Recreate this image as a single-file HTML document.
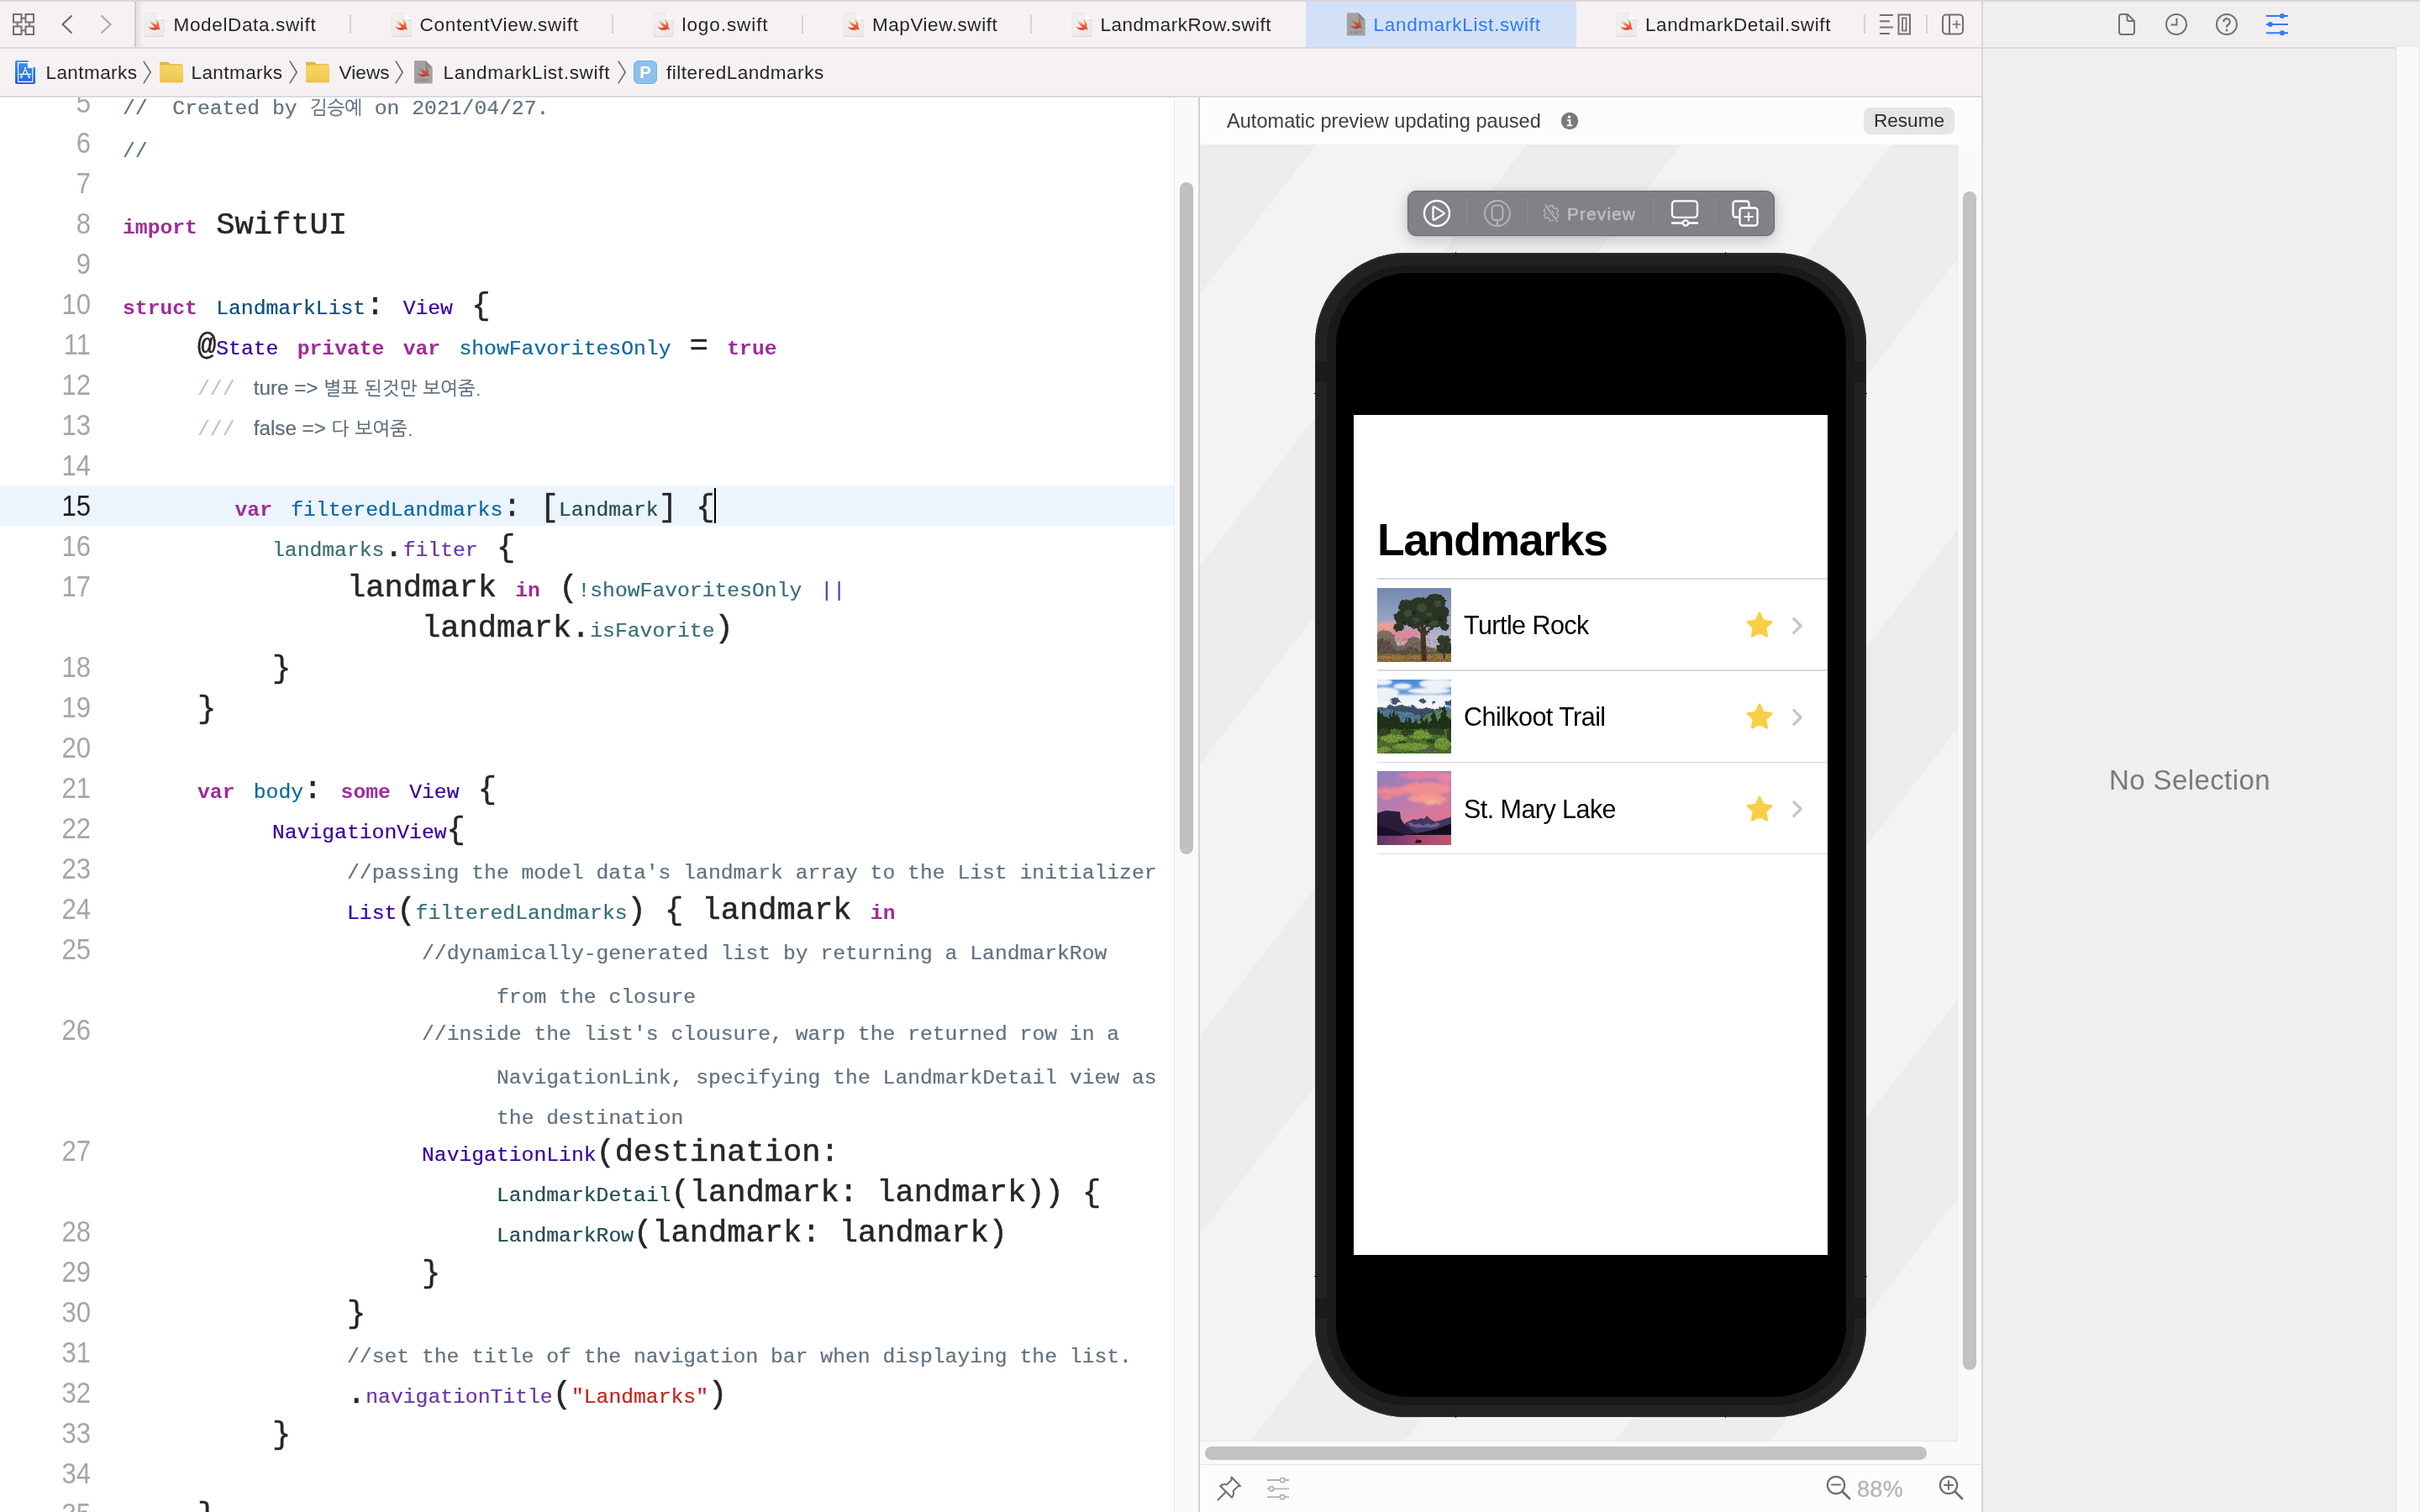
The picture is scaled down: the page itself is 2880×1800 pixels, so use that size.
<!DOCTYPE html>
<html lang="en">
<head>
<meta charset="utf-8">
<title>LandmarkList.swift</title>
<style>
*{box-sizing:border-box;margin:0;padding:0}
html,body{width:2880px;height:1800px;overflow:hidden;background:#fff}
body{position:relative;will-change:transform;font-family:"Liberation Sans","NanumGothic",sans-serif;color:#262626}
.abs{position:absolute}
/* top bars */
#topline{left:0;top:0;width:2880px;height:2px;background:#d9d6d8}
#tabbar{left:0;top:2px;width:2358px;height:54px;background:#f6f2f4}
#tabborder{left:0;top:56px;width:2880px;height:2px;background:#dbd8da}
#crumbbar{left:0;top:58px;width:2358px;height:56px;background:#f6f2f4}
#crumbborder{left:0;top:114px;width:2358px;height:2px;background:#dcd9db}
#navdiv{left:160px;top:2px;width:2px;height:54px;background:#cfcccd}
#navshadow{left:162px;top:2px;width:9px;height:54px;background:linear-gradient(90deg,#e3dfe1,#f6f2f4)}
.tab{top:3px;height:54px;white-space:nowrap;font-size:22.5px;letter-spacing:.55px;line-height:54px;color:#262626}
.tabsep{top:18px;width:2px;height:22px;background:#d6d3d5}
#activetab{left:1554px;top:2px;width:322px;height:54px;background:#d3e1f8}
.crumb{top:59px;height:56px;line-height:56px;white-space:nowrap;font-size:22.5px;letter-spacing:.42px;margin-left:-.5px;color:#262626}
/* inspector */
#inspector{left:2360px;top:2px;width:520px;height:1798px;background:#f1eeef}
#vdiv{left:2358px;top:2px;width:2px;height:1798px;background:#d8d5d7}
#insptrack{left:2850px;top:56px;width:30px;height:1744px;background:linear-gradient(90deg,#eeeaeb 0,#e8e7e7 1.5px,#f6f6f6 2px,#fafafa 5px,#fafafa 27.5px,#f0efef 28px)}
#nosel{left:2510px;top:907px;font-size:33px;letter-spacing:.4px;color:#7b797a;line-height:44px;white-space:nowrap}
/* editor */
#editor{left:0;top:116px;width:1397px;height:1684px;background:#fff;overflow:hidden}
#edgutter{left:1397px;top:116px;width:29px;height:1684px;background:#fafafa;border-left:1px solid #e8e8e8}
#edthumb{left:1404px;top:217px;width:16px;height:800px;border-radius:8px;background:#c1c1c1}
#eddiv{left:1426px;top:116px;width:2px;height:1684px;background:#d6d3d4}
#hl{left:0;top:462px;width:1397px;height:48px;background:#ecf4fe}
</style>
<style>
.row{position:absolute;height:48px;line-height:48px;margin-top:-33.9px;white-space:pre;font-family:"Liberation Mono","NanumGothic",monospace;font-size:37.08px;color:#262626}
.row{-webkit-text-stroke-width:.5px}
.row span{line-height:0;font-size:24.71px;-webkit-text-stroke-width:.22px}
.row span.k{-webkit-text-stroke-width:0}
.ln{position:absolute;left:0;width:108px;text-align:right;height:48px;line-height:48px;margin-top:-36.4px;font-size:34.5px;letter-spacing:0;transform:scaleX(.9);transform-origin:100% 50%;color:#a6a6a6;font-family:"Liberation Sans",sans-serif}
.ln.cur{color:#1f1f1f}
.k{color:#a02c98;font-weight:bold}
.c,.ck,.csp{color:#637280}
.c3{color:#bcc4cc}
.s{color:#c4241c}
.td{color:#0b4f79}
.d{color:#0f68a0}
.pc{color:#224e53}
.pv{color:#377178}
.sc{color:#3900a0}
.sf{color:#6c36a9}
.row span.dc{font-family:"Liberation Sans","NanumGothic",sans-serif;font-size:24.2px;color:#5d6c79}
.row span.dk{font-family:"NanumGothic","Liberation Sans",sans-serif;font-size:22.1px;color:#5d6c79;word-spacing:1px}
.row span.ck{font-family:"NanumGothic",sans-serif;font-size:22.5px;letter-spacing:-.3px}
#caret{left:850px;top:465px;width:2px;height:42px;background:#000}
</style>
<style>
#pvhead{left:1428px;top:116px;width:930px;height:56px;background:#fcfcfc}
#pvtitle{left:1460px;top:116px;height:56px;line-height:56px;font-size:23.6px;letter-spacing:.0px;color:#3d3d3d;white-space:nowrap}
#resume{left:2218px;top:128px;width:108px;height:32px;border-radius:8px;background:#e5e5e5;color:#2e2e2e;font-size:22.6px;line-height:32px;text-align:center;padding-top:0}
#canvas{left:1428px;top:172px;width:902px;height:1543px;background:#f3f3f3;overflow:hidden}
#cvborderR{left:2329px;top:172px;width:1px;height:1544px;background:#e6e6e6}
#cvborderB{left:1428px;top:1715px;width:902px;height:1px;background:#e6e6e6}
#vtrack{left:2330px;top:172px;width:28px;height:1572px;background:#fafafa}
#vthumb{left:2336px;top:228px;width:16px;height:1403px;border-radius:8px;background:#c2c2c2}
#htrack{left:1428px;top:1716px;width:902px;height:28px;background:#fafafa}
#hthumb{left:1434px;top:1722px;width:859px;height:16px;border-radius:8px;background:#c2c2c2}
#pvbotline{left:1428px;top:1743px;width:930px;height:1px;background:#e8e8e8}
#pvbot{left:1428px;top:1744px;width:930px;height:56px;background:#fcfcfc}
#zoompct{left:2210px;top:1753px;font-size:27px;line-height:40px;color:#b5b5b5;letter-spacing:.3px;-webkit-text-stroke:.35px #b5b5b5}
/* toolbar */
#tb{left:1675px;top:227px;width:437px;height:54px;border-radius:10px;background:#818288;border:1.5px solid #696a70;box-shadow:0 5px 18px rgba(0,0,0,.2),0 0 3px rgba(0,0,0,.12)}
.tbsep{top:237px;width:1px;height:33px;background:#8b8c92}
#tbprev{left:1865px;top:237px;height:36px;line-height:36px;font-size:21px;font-weight:normal;color:#bcbdc1;-webkit-text-stroke:.6px #bcbdc1;letter-spacing:1.05px}
/* phone */
#phone{left:1565px;top:301px;width:656px;height:1386px;border-radius:108px;background:#222;box-shadow:inset 0 0 0 1.5px #2e2e2e}
#phone2{left:1579px;top:315.5px;width:628px;height:1357px;border-radius:95px;background:#191919}
#phone3{left:1589.5px;top:325px;width:607.5px;height:1337.5px;border-radius:86px;background:#000}
#screen{left:1611px;top:494px;width:564px;height:1000px;background:#fff;overflow:hidden}
#lmtitle{left:28px;top:114px;font-size:53.5px;font-weight:bold;line-height:70px;color:#000;letter-spacing:-1.3px;white-space:nowrap}
.sepl{left:28px;width:536px;height:1.5px;background:#d9d9db}
.thumb{left:29px;width:88px;height:88px}
.rtext{left:131px;font-size:30.5px;line-height:50px;color:#000;white-space:nowrap;letter-spacing:-.55px}
</style>
</head><body>
<svg width="0" height="0" style="position:absolute">
<defs>
<linearGradient id="gSwift" x1="0" y1="0" x2="0" y2="1"><stop offset="0" stop-color="#f7a34d"/><stop offset="1" stop-color="#e7352b"/></linearGradient>
<linearGradient id="gSwiftD" x1="0" y1="0" x2="0" y2="1"><stop offset="0" stop-color="#c9743f"/><stop offset="1" stop-color="#b83a29"/></linearGradient>
<linearGradient id="gPage" x1="0" y1="0" x2="1" y2="1"><stop offset="0" stop-color="#f1f1f1"/><stop offset="1" stop-color="#e9e9e9"/></linearGradient>
<linearGradient id="gProj" x1="0" y1="0" x2="0" y2="1"><stop offset="0" stop-color="#4196e8"/><stop offset="1" stop-color="#2160df"/></linearGradient>
<linearGradient id="gFold" x1="0" y1="0" x2="0" y2="1"><stop offset="0" stop-color="#f6d566"/><stop offset="1" stop-color="#f0c84f"/></linearGradient>
<path id="bird" d="M13.543 3.41c4.114 2.47 6.545 7.162 5.549 11.131-.024.093-.05.181-.076.272l.002.001c2.062 2.538 1.5 5.258 1.236 4.745-1.072-2.086-3.066-1.568-4.088-1.043a6.803 6.803 0 0 1-.281.158l-.02.012-.002.002c-2.115 1.123-4.957 1.205-7.812-.022a12.568 12.568 0 0 1-5.64-4.838c.649.48 1.35.902 2.097 1.252 3.019 1.414 6.051 1.311 8.197-.002C9.651 12.73 7.101 9.67 5.146 7.191a10.628 10.628 0 0 1-1.005-1.384c2.34 2.142 6.038 4.83 7.365 5.576C8.69 8.408 6.208 4.743 6.324 4.86c4.436 4.47 8.528 6.996 8.528 6.996.154.085.27.154.36.213.085-.215.16-.437.224-.668.708-2.588-.09-5.548-1.893-7.992z"/>
<!-- swift file icon 26x30 -->
<symbol id="icSwift" viewBox="0 0 26 30">
<path d="M2.300 1.400h14.200l7.800 7.800V27.600a1.300 1.300 0 0 1-1.300 1.300H2.300A1.300 1.300 0 0 1 1 27.600V2.700A1.300 1.300 0 0 1 2.300 1.400z" fill="#cfcccd" transform="translate(0,1)" opacity=".75"/>
<path d="M2.300 1.400h14.200l7.800 7.800V27.600a1.300 1.300 0 0 1-1.300 1.300H2.300A1.300 1.300 0 0 1 1 27.600V2.700A1.300 1.300 0 0 1 2.300 1.400z" fill="url(#gPage)" stroke="#e2e0e1" stroke-width=".6"/>
<path d="M16.500 1.400l7.800 7.800h-6.500a1.300 1.300 0 0 1-1.300-1.300z" fill="#fcfcfc"/>
<path d="M16.700 9.200h7.600v1.800c-2.200-1.200-4.800-1.700-7.600-1.800z" fill="#d4d4d4" opacity=".6"/>
<use href="#bird" transform="translate(3.100,6.200) scale(.8)" fill="url(#gSwift)"/>
</symbol>
<!-- gray swift file icon 24x28 -->
<symbol id="icSwiftG" viewBox="0 0 24 28">
<path d="M2.200 .300h12.300L22.700 8.500V26.300a1.300 1.300 0 0 1-1.300 1.300H2.200A1.300 1.300 0 0 1 .900 26.300V1.600A1.300 1.300 0 0 1 2.200 .300z" fill="#a3a1a2"/>
<path d="M14.500 .300L22.700 8.500h-6.900a1.300 1.300 0 0 1-1.300-1.300z" fill="#8a8889"/>
<use href="#bird" transform="translate(2.300,3.600) scale(.8)" fill="url(#gSwiftD)"/>
<text x="11.800" y="25.200" text-anchor="middle" font-family="Liberation Sans,sans-serif" font-weight="bold" font-size="4.300" letter-spacing=".2" fill="#868485">SWIFT</text>
</symbol>
<symbol id="icFolder" viewBox="0 0 28 26">
<path d="M1.500 .800h7.800c.8 0 1.400.3 1.900.9l1.400 1.500h13.300a1.600 1.600 0 0 1 1.600 1.600V8H0V2.300A1.500 1.500 0 0 1 1.500 .800z" fill="#e2b53e"/>
<path d="M0 6.200a1.600 1.600 0 0 1 1.600-1.600h24.800A1.600 1.600 0 0 1 28 6.200v17.600a1.600 1.600 0 0 1-1.600 1.600H1.600A1.600 1.600 0 0 1 0 23.800z" fill="url(#gFold)"/>
<rect x="0" y="22.600" width="28" height="1" fill="#e3b840" opacity=".8"/>
</symbol>
<symbol id="icProj" viewBox="0 0 24 28">
<path d="M1.800 0h14L24 8.200V26.200A1.800 1.800 0 0 1 22.200 28H1.800A1.800 1.800 0 0 1 0 26.200V1.800A1.800 1.800 0 0 1 1.800 0z" fill="url(#gProj)"/>
<path d="M3.600 2.600h11.800v6.200h5.400V25.400H3.600z" fill="none" stroke="#fff" stroke-width="1.100"/>
<path d="M15.800 0L24 8.200h-8.200z" fill="#fff"/>
<path d="M12.600 8.800l-5 10.400M11.400 8.800l5 10.400M6 16.400h12" fill="none" stroke="#fff" stroke-width="1.250" stroke-linecap="round"/><circle cx="7.300" cy="20" r="1.100" fill="none" stroke="#fff" stroke-width=".8"/><circle cx="16.700" cy="20" r="1.100" fill="none" stroke="#fff" stroke-width=".8"/><circle cx="6" cy="16.400" r="1" fill="#fff"/><circle cx="18" cy="16.400" r="1" fill="#fff"/>
</symbol>
<symbol id="icChev" viewBox="0 0 10 28">
<path d="M.800 .600L9.200 14 .800 27.400" fill="none" stroke="#6a6869" stroke-width="1.600"/>
</symbol>
</defs>
</svg>
<div id="inspector" class="abs"></div>
<div id="tabbar" class="abs"></div>
<div id="crumbbar" class="abs"></div>
<div id="activetab" class="abs"></div>
<div id="topline" class="abs"></div>
<div id="tabborder" class="abs"></div>
<div id="crumbborder" class="abs"></div>
<div id="navshadow" class="abs"></div>
<div id="navdiv" class="abs"></div>
<div id="vdiv" class="abs"></div>
<div id="insptrack" class="abs"></div>
<!-- nav icons -->
<svg class="abs" style="left:14px;top:15px" width="28" height="28" viewBox="0 0 28 28" fill="none" stroke="#727071" stroke-width="2">
<rect x="2" y="2" width="9.500" height="9.500"/><rect x="16.500" y="2" width="9.500" height="9.500"/><rect x="2" y="16.500" width="9.500" height="9.500"/><rect x="16.500" y="16.500" width="9.500" height="9.500"/>
<path d="M11.500 6.700h5M6.700 11.500v5M21.200 11.500v5M11.500 21.200h5"/>
</svg>
<svg class="abs" style="left:72px;top:17px" width="16" height="24" viewBox="0 0 16 24" fill="none" stroke="#6e6c6d" stroke-width="2.200"><path d="M13.500 1.500L2.500 12l11 10.500"/></svg>
<svg class="abs" style="left:118px;top:17px" width="16" height="24" viewBox="0 0 16 24" fill="none" stroke="#aeacad" stroke-width="2.200"><path d="M2.500 1.500L13.500 12l-11 10.500"/></svg>
<!-- tabs -->
<svg class="abs" style="left:171px;top:14px" width="26" height="30"><use href="#icSwift"/></svg>
<div class="abs tab" style="left:206.500px;letter-spacing:.65px">ModelData.swift</div>
<div class="abs tabsep" style="left:416px"></div>
<svg class="abs" style="left:465px;top:14px" width="26" height="30"><use href="#icSwift"/></svg>
<div class="abs tab" style="left:499.500px;letter-spacing:.7px">ContentView.swift</div>
<div class="abs tabsep" style="left:728px"></div>
<svg class="abs" style="left:777px;top:14px" width="26" height="30"><use href="#icSwift"/></svg>
<div class="abs tab" style="left:811.500px;letter-spacing:.92px">logo.swift</div>
<div class="abs tabsep" style="left:954px"></div>
<svg class="abs" style="left:1003px;top:14px" width="26" height="30"><use href="#icSwift"/></svg>
<div class="abs tab" style="left:1038px">MapView.swift</div>
<div class="abs tabsep" style="left:1226px"></div>
<svg class="abs" style="left:1275px;top:14px" width="26" height="30"><use href="#icSwift"/></svg>
<div class="abs tab" style="left:1309.500px;letter-spacing:.5px">LandmarkRow.swift</div>
<svg class="abs" style="left:1602px;top:15px" width="24" height="28"><use href="#icSwiftG"/></svg>
<div class="abs tab" style="left:1634.500px;color:#2f7af5;letter-spacing:.71px">LandmarkList.swift</div>
<svg class="abs" style="left:1923px;top:14px" width="26" height="30"><use href="#icSwift"/></svg>
<div class="abs tab" style="left:1958px;letter-spacing:.61px">LandmarkDetail.swift</div>
<div class="abs tabsep" style="left:2218px"></div>
<svg class="abs" style="left:2237px;top:16px" width="38" height="26" viewBox="0 0 38 26" fill="none" stroke="#727071" stroke-width="2">
<path d="M0 2h16M0 9.300h12M0 16.600h16M0 24h12"/><rect x="22.500" y="1.500" width="13.500" height="23"/><rect x="27" y="5.500" width="4.500" height="15" stroke-width="1.800"/>
</svg>
<div class="abs tabsep" style="left:2292px"></div>
<svg class="abs" style="left:2310px;top:15px" width="28" height="28" viewBox="0 0 28 28" fill="none" stroke="#727071" stroke-width="2">
<rect x="2" y="2.500" width="24" height="23" rx="4"/><path d="M10 2.500v23"/><path d="M13.800 14h9.400M18.500 9.300v9.400" stroke-width="1.700"/>
</svg>
<!-- breadcrumb -->
<svg class="abs" style="left:18px;top:72px" width="24" height="28"><use href="#icProj"/></svg>
<div class="abs crumb" style="left:55px">Lantmarks</div>
<svg class="abs" style="left:170px;top:72px" width="10" height="28"><use href="#icChev"/></svg>
<svg class="abs" style="left:190px;top:73px" width="28" height="26"><use href="#icFolder"/></svg>
<div class="abs crumb" style="left:228px">Lantmarks</div>
<svg class="abs" style="left:344px;top:72px" width="10" height="28"><use href="#icChev"/></svg>
<svg class="abs" style="left:364px;top:73px" width="28" height="26"><use href="#icFolder"/></svg>
<div class="abs crumb" style="left:404px;letter-spacing:.12px">Views</div>
<svg class="abs" style="left:470px;top:72px" width="10" height="28"><use href="#icChev"/></svg>
<svg class="abs" style="left:492px;top:72px" width="24" height="28"><use href="#icSwiftG"/></svg>
<div class="abs crumb" style="left:528px;letter-spacing:.68px">LandmarkList.swift</div>
<svg class="abs" style="left:735px;top:72px" width="10" height="28"><use href="#icChev"/></svg>
<div class="abs" style="left:754px;top:72px;width:28px;height:28px;border-radius:6px;background:#8ec0ea;border:1.500px solid #6fb0e6;color:#fff;font-weight:bold;font-size:20.500px;line-height:25px;text-align:center;box-shadow:0 0 0 1px rgba(255,255,255,.55)">P</div>
<div class="abs crumb" style="left:793.500px;letter-spacing:.52px">filteredLandmarks</div>
<!-- inspector -->
<svg class="abs" style="left:2520px;top:15px" width="22" height="28" viewBox="0 0 22 28" fill="none" stroke="#727071" stroke-width="2" stroke-linejoin="round">
<path d="M4.500 2h7.500l8 8v13.500a2.500 2.500 0 0 1-2.500 2.500h-13A2.500 2.500 0 0 1 2 23.500v-19A2.500 2.500 0 0 1 4.500 2z"/><path d="M11.500 2.500v5.500a2 2 0 0 0 2 2h6"/>
</svg>
<svg class="abs" style="left:2576px;top:15px" width="28" height="28" viewBox="0 0 28 28" fill="none" stroke="#727071" stroke-width="2"><circle cx="14" cy="14" r="12"/><path d="M14.500 6.500v8h-7"/></svg>
<svg class="abs" style="left:2636px;top:15px" width="28" height="28" viewBox="0 0 28 28" fill="none" stroke="#727071" stroke-width="2"><circle cx="14" cy="14" r="12"/><path d="M10.200 11a3.800 3.800 0 1 1 5.800 3.200c-1.300.8-2 1.400-2 3v.4" stroke-width="2.200"/><circle cx="14" cy="21" r="1.400" fill="#727071" stroke="none"/></svg>
<svg class="abs" style="left:2696px;top:14px" width="28" height="30" viewBox="0 0 28 30" fill="none" stroke="#3478f6" stroke-width="2"><path d="M1 5h26M1 15h26M1 25.200h26"/><circle cx="20" cy="5" r="3" fill="#3478f6" stroke="none"/><circle cx="5.800" cy="15" r="3" fill="#3478f6" stroke="none"/><circle cx="20" cy="25.200" r="3" fill="#3478f6" stroke="none"/></svg>
<div id="nosel" class="abs">No Selection</div>
<div id="editor" class="abs">
<div id="hl" class="abs"></div>
<div class="ln" style="top:18.5px">5</div>
<div class="row" style="left:146px;top:19.6px"><span class="c">//</span><span class="csp">  </span><span class="c">Created by</span><span class="csp"> </span><span class="ck">김승예</span><span class="csp"> </span><span class="c">on 2021/04/27.</span></div>
<div class="ln" style="top:66.5px">6</div>
<div class="row" style="left:146px;top:70.8px"><span class="c">//</span></div>
<div class="ln" style="top:114.5px">7</div>
<div class="ln" style="top:162.5px">8</div>
<div class="row" style="left:146px;top:162px"><span class="k">import</span> SwiftUI</div>
<div class="ln" style="top:210.5px">9</div>
<div class="ln" style="top:258.5px">10</div>
<div class="row" style="left:146px;top:258px"><span class="k">struct</span> <span class="td">LandmarkList</span>: <span class="sc">View</span> {</div>
<div class="ln" style="top:306.5px">11</div>
<div class="row" style="left:235px;top:306px">@<span class="sc">State</span> <span class="k">private</span> <span class="k">var</span> <span class="d">showFavoritesOnly</span> = <span class="k">true</span></div>
<div class="ln" style="top:354.5px">12</div>
<div class="row" style="left:235px;top:354px"><span class="c3">///</span> <span class="dc">ture =&gt; </span><span class="dk">별표 된것만 보여줌.</span></div>
<div class="ln" style="top:402.5px">13</div>
<div class="row" style="left:235px;top:402px"><span class="c3">///</span> <span class="dc">false =&gt; </span><span class="dk">다 보여줌.</span></div>
<div class="ln" style="top:450.5px">14</div>
<div class="ln cur" style="top:498.5px">15</div>
<div class="row" style="left:279.5px;top:498px"><span class="k">var</span> <span class="d">filteredLandmarks</span>: [<span class="pc">Landmark</span>] {</div>
<div class="ln" style="top:546.5px">16</div>
<div class="row" style="left:324px;top:546px"><span class="pv">landmarks</span>.<span class="sf">filter</span> {</div>
<div class="ln" style="top:594.5px">17</div>
<div class="row" style="left:413px;top:594px">landmark <span class="k">in</span> (<span class="pv">!showFavoritesOnly</span> <span class="sf">||</span></div>
<div class="row" style="left:502px;top:642px">landmark.<span class="pv">isFavorite</span>)</div>
<div class="ln" style="top:690.5px">18</div>
<div class="row" style="left:324px;top:690px">}</div>
<div class="ln" style="top:738.5px">19</div>
<div class="row" style="left:235px;top:738px">}</div>
<div class="ln" style="top:786.5px">20</div>
<div class="ln" style="top:834.5px">21</div>
<div class="row" style="left:235px;top:834px"><span class="k">var</span> <span class="d">body</span>: <span class="k">some</span> <span class="sc">View</span> {</div>
<div class="ln" style="top:882.5px">22</div>
<div class="row" style="left:324px;top:882px"><span class="sc">NavigationView</span>{</div>
<div class="ln" style="top:930.5px">23</div>
<div class="row" style="left:413px;top:930px"><span class="c">//passing the model data's landmark array to the List initializer</span></div>
<div class="ln" style="top:978.5px">24</div>
<div class="row" style="left:413px;top:978px"><span class="sc">List</span>(<span class="pv">filteredLandmarks</span>) { landmark <span class="k">in</span></div>
<div class="ln" style="top:1026.5px">25</div>
<div class="row" style="left:502px;top:1026px"><span class="c">//dynamically-generated list by returning a LandmarkRow</span></div>
<div class="row" style="left:591px;top:1077.7px"><span class="c">from the closure</span></div>
<div class="ln" style="top:1122.5px">26</div>
<div class="row" style="left:502px;top:1122px"><span class="c">//inside the list's clousure, warp the returned row in a</span></div>
<div class="row" style="left:591px;top:1173.9px"><span class="c">NavigationLink, specifying the LandmarkDetail view as</span></div>
<div class="row" style="left:591px;top:1221.9px"><span class="c">the destination</span></div>
<div class="ln" style="top:1266.5px">27</div>
<div class="row" style="left:502px;top:1266px"><span class="sc">NavigationLink</span>(destination:</div>
<div class="row" style="left:591px;top:1314px"><span class="pc">LandmarkDetail</span>(landmark: landmark)) {</div>
<div class="ln" style="top:1362.5px">28</div>
<div class="row" style="left:591px;top:1362px"><span class="pc">LandmarkRow</span>(landmark: landmark)</div>
<div class="ln" style="top:1410.5px">29</div>
<div class="row" style="left:502px;top:1410px">}</div>
<div class="ln" style="top:1458.5px">30</div>
<div class="row" style="left:413px;top:1458px">}</div>
<div class="ln" style="top:1506.5px">31</div>
<div class="row" style="left:413px;top:1506px"><span class="c">//set the title of the navigation bar when displaying the list.</span></div>
<div class="ln" style="top:1554.5px">32</div>
<div class="row" style="left:413px;top:1554px">.<span class="sf">navigationTitle</span>(<span class="s">"Landmarks"</span>)</div>
<div class="ln" style="top:1602.5px">33</div>
<div class="row" style="left:324px;top:1602px">}</div>
<div class="ln" style="top:1650.5px">34</div>
<div class="ln" style="top:1698.5px">35</div>
<div class="row" style="left:235px;top:1698px">}</div>
<div id="caret" class="abs"></div>
</div>
<div id="edgutter" class="abs"></div><div id="edthumb" class="abs"></div><div id="eddiv" class="abs"></div>
<div id="pvhead" class="abs"></div>
<div id="pvtitle" class="abs">Automatic preview updating paused</div>
<svg class="abs" style="left:1857px;top:133px" width="22" height="22" viewBox="0 0 22 22"><circle cx="11" cy="11" r="10.200" fill="#7a7a7a"/><circle cx="10.600" cy="6.300" r="1.700" fill="#fff"/><path d="M8 9.300h4.300v6.200h2v1.700H7.800v-1.700h2.200V11H8z" fill="#fff"/></svg>
<div id="resume" class="abs">Resume</div>
<div id="canvas" class="abs"><svg class="abs" style="left:0;top:0" width="902" height="1543" viewBox="0 0 902 1543" fill="#ededed"><polygon points="-44.9,0 138.6,0 -1058.8,1543 -1242.3,1543"/><polygon points="389.3,0 572.8,0 -624.6,1543 -808.1,1543"/><polygon points="823.5,0 1007.0,0 -190.4,1543 -373.9,1543"/><polygon points="1257.7,0 1441.2,0 243.8,1543 60.3,1543"/><polygon points="1691.9,0 1875.4,0 678.0,1543 494.5,1543"/></svg></div>
<div id="cvborderR" class="abs"></div><div id="vtrack" class="abs"></div><div id="vthumb" class="abs"></div>
<div id="htrack" class="abs"></div><div id="cvborderB" class="abs"></div><div id="hthumb" class="abs"></div>
<div id="pvbot" class="abs"></div><div id="pvbotline" class="abs"></div>
<svg class="abs" style="left:1447px;top:1756px" width="32" height="32" viewBox="0 0 32 32" fill="none" stroke="#6f6f6f" stroke-width="2" stroke-linejoin="round" stroke-linecap="round"><path d="M18.500 2.500l10.500 10.500-3 .6-5.400 5.400c.9 2.700.3 5.600-1.600 7.800L5.200 13c2.200-1.900 5.100-2.500 7.800-1.600l5.400-5.400z"/><path d="M12 20L2.500 29.500"/></svg>
<svg class="abs" style="left:1507px;top:1756px" width="28" height="32" viewBox="0 0 28 32" fill="none" stroke="#b3b3b3" stroke-width="1.800"><path d="M1 6h15.500M22 6h5M1 16.300h2.500M9 16.300h18M1 26.200h15.500M22 26.200h5"/><circle cx="19.200" cy="6" r="2.700"/><circle cx="6.200" cy="16.300" r="2.700"/><circle cx="19.200" cy="26.200" r="2.700"/></svg>
<svg class="abs" style="left:2172px;top:1755px" width="32" height="32" viewBox="0 0 32 32" fill="none" stroke="#6f6f6f" stroke-width="2.200" stroke-linecap="round"><circle cx="13" cy="13" r="10.200"/><path d="M20.500 20.500l8.500 8.500" stroke-width="2.800"/><path d="M8 12.500h10" stroke-width="2"/></svg>
<div id="zoompct" class="abs">88%</div>
<svg class="abs" style="left:2306px;top:1755px" width="32" height="32" viewBox="0 0 32 32" fill="none" stroke="#6f6f6f" stroke-width="2.200" stroke-linecap="round"><circle cx="13" cy="13" r="10.200"/><path d="M20.500 20.500l8.500 8.500" stroke-width="2.800"/><path d="M8 13h10M13 8v10" stroke-width="2"/></svg>
<div id="tb" class="abs"></div>
<div class="abs tbsep" style="left:1745px"></div>
<div class="abs tbsep" style="left:1817px"></div>
<div class="abs tbsep" style="left:1968px"></div>
<div class="abs tbsep" style="left:2040px"></div>
<svg class="abs" style="left:1692px;top:236px" width="36" height="36" viewBox="0 0 36 36" fill="none" stroke="#fff" stroke-width="2.300" stroke-linejoin="round"><circle cx="18" cy="18" r="15"/><path d="M13.500 11.200v13.600a1 1 0 0 0 1.500.9l11-6.800a1 1 0 0 0 0-1.800l-11-6.800a1 1 0 0 0-1.500.9z" stroke-width="2.200"/></svg>
<svg class="abs" style="left:1764px;top:236px" width="36" height="36" viewBox="0 0 36 36" fill="none" stroke="#b2b3b7" stroke-width="2"><circle cx="18" cy="18" r="15"/><rect x="11.500" y="8.500" width="13" height="17.500" rx="4.500"/><path d="M18 26v7"/></svg>
<svg class="abs" style="left:1833px;top:240px" width="26" height="28" viewBox="0 0 26 28" fill="none" stroke="#b6b7bb" stroke-width="1.600" stroke-linejoin="round"><g transform="translate(13,14) scale(.86) translate(-13,-14)"><path d="M10.800 3.200h4.400l.7 3 2.100 1.200 2.900-.9 2.200 3.800-2.200 2.100v2.400l2.200 2.100-2.200 3.800-2.900-.9-2.100 1.200-.7 3h-4.400l-.7-3-2.100-1.200-2.900.9-2.200-3.800 2.200-2.100v-2.400L2.900 10.300l2.200-3.800 2.900.9 2.100-1.200z"/><circle cx="13" cy="14" r="3.200" stroke-width="1.400"/></g><path d="M5.500 4.500l14 19" stroke="#818288" stroke-width="4.600"/><path d="M5.800 3.800l15 20.500" stroke-width="1.700"/></svg>
<div id="tbprev" class="abs">Preview</div>
<svg class="abs" style="left:1987px;top:236px" width="36" height="36" viewBox="0 0 36 36" fill="none" stroke="#fff" stroke-width="2.300"><rect x="3" y="3.300" width="30" height="19.500" rx="3.500"/><path d="M2 29.500h13.500M22.500 29.500H34"/><circle cx="19" cy="29.500" r="3.200"/></svg>
<svg class="abs" style="left:2059px;top:236px" width="36" height="36" viewBox="0 0 36 36" fill="none" stroke="#fff" stroke-width="2.300"><path d="M10.500 22.500h-4a3 3 0 0 1-3-3v-13a3 3 0 0 1 3-3h13a3 3 0 0 1 3 3v4"/><rect x="11.500" y="11.500" width="21" height="21" rx="3"/><path d="M16.500 22h11M22 16.500v11" stroke-width="2.100"/></svg>
<div id="phone" class="abs"></div><div id="phone2" class="abs"></div><div id="phone3" class="abs"></div>
<div class="abs" style="left:1566px;top:430px;width:13px;height:25px;background:#1b1b1b"></div>
<div class="abs" style="left:2207px;top:430px;width:13px;height:25px;background:#1b1b1b"></div>
<div class="abs" style="left:1566px;top:1545px;width:13px;height:25px;background:#1b1b1b"></div>
<div class="abs" style="left:2207px;top:1545px;width:13px;height:25px;background:#1b1b1b"></div>
<div class="abs" style="left:1564px;top:468px;width:4px;height:1px;background:#161616"></div>
<div class="abs" style="left:2218px;top:468px;width:4px;height:1px;background:#161616"></div>
<div class="abs" style="left:1564px;top:1519px;width:4px;height:1px;background:#161616"></div>
<div class="abs" style="left:2218px;top:1519px;width:4px;height:1px;background:#161616"></div>
<div class="abs" style="left:1732px;top:300px;width:1px;height:4px;background:#161616"></div>
<div class="abs" style="left:2053px;top:300px;width:1px;height:4px;background:#161616"></div>
<div class="abs" style="left:1732px;top:1684px;width:1px;height:4px;background:#161616"></div>
<div class="abs" style="left:2053px;top:1684px;width:1px;height:4px;background:#161616"></div>
<div id="screen" class="abs">
<div id="lmtitle" class="abs">Landmarks</div>
<div class="abs sepl" style="top:194.0px"></div>
<div class="abs sepl" style="top:303.3px"></div>
<div class="abs sepl" style="top:412.6px"></div>
<div class="abs sepl" style="top:521.9px"></div>
<svg class="abs thumb" style="left:28px;top:206px" width="88" height="88" viewBox="0 0 88 88"><defs><linearGradient id="t1sky" x1="0" y1="0" x2="0" y2="1"><stop offset="0" stop-color="#7388ae"/><stop offset=".5" stop-color="#9fa9c5"/><stop offset=".8" stop-color="#c4bfca"/></linearGradient><filter id="bl1"><feGaussianBlur stdDeviation="1.600"/></filter><filter id="bl05"><feGaussianBlur stdDeviation=".6"/></filter>
<filter id="rough" x="-10%" y="-10%" width="120%" height="120%"><feTurbulence type="fractalNoise" baseFrequency=".22" numOctaves="2" seed="3" result="n"/><feDisplacementMap in="SourceGraphic" in2="n" scale="5" xChannelSelector="R" yChannelSelector="G"/><feGaussianBlur stdDeviation=".35"/></filter>
<filter id="grain" x="0" y="0" width="100%" height="100%"><feTurbulence type="fractalNoise" baseFrequency=".55" numOctaves="2" seed="7" result="n"/><feColorMatrix in="n" type="matrix" values="0 0 0 0 0  0 0 0 0 0  0 0 0 0 0  0 0 0 -2.2 1.25" result="a"/><feComposite in="a" in2="SourceGraphic" operator="in"/></filter>
<clipPath id="cp88"><rect width="88" height="88"/></clipPath></defs>
<g clip-path="url(#cp88)"><rect width="88" height="88" fill="url(#t1sky)"/>
<g filter="url(#bl1)"><ellipse cx="14" cy="45" rx="16" ry="4.500" fill="#ea9c94"/><ellipse cx="28" cy="55" rx="24" ry="7" fill="#d98b9d"/><ellipse cx="8" cy="54" rx="12" ry="5" fill="#e89390"/><ellipse cx="36" cy="65" rx="9" ry="3" fill="#eba091"/></g>
<g filter="url(#rough)"><path d="M-4 55l8-4 7-1 6 3 4 7 3 8 5 2 5-4 4-6 6-3 5 3 5 6 6 3 8 2 6 2h14v14H-4z" fill="#7d6c5f"/><path d="M-4 63l10-3 8 4 6 9 10 2 8-5 7 1 8 6 38 2v9H-4z" fill="#64574c"/>
<rect x="-4" y="78" width="96" height="14" fill="#94703f"/><path d="M-4 81h96v3H-4z" fill="#a9844a" opacity=".7"/><path d="M-4 77c10-2 20 1 30 0s20-2 30-1 22 0 36-1v4H-4z" fill="#5e5a3e" opacity=".85"/>
<g fill="#323d29"><ellipse cx="79" cy="62" rx="8" ry="6"/><ellipse cx="84" cy="72" rx="6" ry="7"/><ellipse cx="75" cy="72" rx="4" ry="5"/><path d="M78 66h2.500v18H78z"/></g></g>
<path d="M51.500 48c0 13 .6 26 1.500 39h6c-1-13-1.500-26-1-39z" fill="#4a3727"/>
<g filter="url(#rough)"><path d="M53 54l-9-12M57 54l12-10M55 50l-4-14M56 50l7-16" stroke="#3a2e20" stroke-width="3" fill="none"/>
<g fill="#2a3626"><ellipse cx="29" cy="35" rx="9" ry="8"/><ellipse cx="35" cy="22" rx="10" ry="8"/><ellipse cx="50" cy="22" rx="13" ry="11"/><ellipse cx="45" cy="40" rx="10" ry="8"/><ellipse cx="69" cy="17" rx="12" ry="11"/><ellipse cx="77" cy="30" rx="9" ry="9"/><ellipse cx="69" cy="41" rx="14" ry="7"/><ellipse cx="26" cy="47" rx="6" ry="5"/><ellipse cx="80" cy="46" rx="6" ry="4"/><ellipse cx="58" cy="32" rx="12" ry="11"/><ellipse cx="38" cy="31" rx="9" ry="8"/></g>
<g fill="#4a5c40" opacity=".6"><ellipse cx="37" cy="30" rx="5" ry="4"/><ellipse cx="53" cy="24" rx="6" ry="5"/><ellipse cx="67" cy="42" rx="6" ry="3"/><ellipse cx="72" cy="19" rx="4" ry="4"/><ellipse cx="46" cy="38" rx="4" ry="3"/><ellipse cx="62" cy="32" rx="4" ry="3"/></g>
<g fill="#1d261a" opacity=".8"><ellipse cx="44" cy="30" rx="3" ry="3"/><ellipse cx="60" cy="40" rx="4" ry="2.500"/><ellipse cx="32" cy="42" rx="3" ry="2"/><ellipse cx="74" cy="36" rx="3" ry="2.500"/></g></g>
<rect y="60" width="88" height="28" fill="#2a2218" filter="url(#grain)" opacity=".4"/></g></svg>
<div class="abs rtext" style="top:225.1px">Turtle Rock</div>
<svg class="abs" style="left:465px;top:233.1px" width="36" height="34" viewBox="0 0 36 34"><path d="M18 2.800l4.400 9.300 9.800 1.300-7.200 6.900 1.900 10.100L18 25.600 9.100 30.400l1.900-10.100-7.200-6.900 9.800-1.300z" fill="#f8cf46" stroke="#f8cf46" stroke-width="2.600" stroke-linejoin="round"/></svg>
<svg class="abs" style="left:519px;top:237.6px" width="18" height="26" viewBox="0 0 18 26" fill="none" stroke="#c5c5c7" stroke-width="3.200" stroke-linecap="round" stroke-linejoin="round"><path d="M4.800 4.600l8.400 8.400-8.400 8.400"/></svg>
<svg class="abs thumb" style="left:28px;top:315px" width="88" height="88" viewBox="0 0 88 88"><defs><linearGradient id="t2sky" x1="0" y1="0" x2="0" y2="1"><stop offset="0" stop-color="#4a8ad6"/><stop offset="1" stop-color="#8db8e6"/></linearGradient><filter id="bl2"><feGaussianBlur stdDeviation="1.100"/></filter></defs>
<g clip-path="url(#cp88)"><rect width="88" height="40" fill="url(#t2sky)"/>
<g filter="url(#bl2)" fill="#eef2f7"><ellipse cx="6" cy="3" rx="12" ry="4"/><ellipse cx="30" cy="8" rx="11" ry="3.500"/><ellipse cx="72" cy="5" rx="22" ry="6"/><ellipse cx="62" cy="13.500" rx="26" ry="3.500"/><ellipse cx="8" cy="15" rx="18" ry="6"/><rect x="-4" y="18" width="96" height="10"/></g>
<g filter="url(#rough)"><path d="M-4 26l12-1 6-2 7-2 5 2 5 4 8-1 6-2 5 2 8 0 6-1 7 1 11-3v30H-4z" fill="#f2f5f9"/>
<path d="M14 24l7-3 5 2 3 4-5 0-4 3-3-3zM50 25l4-2 5 3-4 3zM64 26l4-1 3 3-5 2zM80 26l12-4v9l-10-1zM28 30l8 2 6-1 6 4 10-2 8 3 10-3 16 3v8H-4v-9l14-2 6-4 5 3z" fill="#43536d"/>
<path d="M-4 37l16-2 14 3 14 2 12 4 10-2 12-6 18-2v24H-4z" fill="#5583a0"/>
<path d="M48 50l10-8 10-5 10-1 14 3v18H48z" fill="#5c8a5e"/></g>
<g filter="url(#rough)"><path d="M-4 38l4 2 2-4 2 5 3-2 2 6 5 1 2-9 2 8 2-10 2 9 2-6 2 8 3 4 3 1 2-8 2 8 3-7 2 8 3 0 2-6 2 7 3-2 2-9 3 9 3-6 2 7 3-3 2-12 3 4 3 9 3-4 2-10 3-6 3 14 6 4V66H-4z" fill="#23341f"/>
<rect x="-4" y="59" width="96" height="33" fill="#50742b"/>
<g fill="#7a9f3e"><ellipse cx="20" cy="70" rx="16" ry="5"/><ellipse cx="52" cy="66" rx="14" ry="5"/><ellipse cx="40" cy="80" rx="22" ry="5"/><ellipse cx="78" cy="76" rx="10" ry="7"/><ellipse cx="8" cy="84" rx="10" ry="4"/></g>
<g fill="#2c431f" opacity=".85"><ellipse cx="8" cy="62" rx="9" ry="5"/><ellipse cx="36" cy="63" rx="8" ry="4"/><ellipse cx="70" cy="62" rx="10" ry="5"/><ellipse cx="88" cy="66" rx="5" ry="8"/><ellipse cx="30" cy="74" rx="5" ry="2"/><ellipse cx="64" cy="73" rx="5" ry="2.500"/><ellipse cx="60" cy="85" rx="8" ry="3" fill="#5f5f5a"/><ellipse cx="16" cy="86" rx="5" ry="2" fill="#5f5f5a"/></g></g>
<rect y="34" width="88" height="54" fill="#1a2412" filter="url(#grain)" opacity=".4"/></g></svg>
<div class="abs rtext" style="top:334.4px">Chilkoot Trail</div>
<svg class="abs" style="left:465px;top:342.4px" width="36" height="34" viewBox="0 0 36 34"><path d="M18 2.800l4.400 9.300 9.800 1.300-7.200 6.900 1.900 10.100L18 25.600 9.100 30.400l1.900-10.100-7.200-6.900 9.800-1.300z" fill="#f8cf46" stroke="#f8cf46" stroke-width="2.600" stroke-linejoin="round"/></svg>
<svg class="abs" style="left:519px;top:346.9px" width="18" height="26" viewBox="0 0 18 26" fill="none" stroke="#c5c5c7" stroke-width="3.200" stroke-linecap="round" stroke-linejoin="round"><path d="M4.800 4.600l8.400 8.400-8.400 8.400"/></svg>
<svg class="abs thumb" style="left:28px;top:424px" width="88" height="88" viewBox="0 0 88 88"><defs><linearGradient id="t3sky" x1="0" y1="0" x2=".35" y2="1"><stop offset="0" stop-color="#8f7fc0"/><stop offset=".45" stop-color="#b67db0"/><stop offset=".75" stop-color="#d9789a"/><stop offset="1" stop-color="#e06f86"/></linearGradient><linearGradient id="t3w" x1="0" y1="0" x2="1" y2="0"><stop offset="0" stop-color="#5b3568"/><stop offset=".6" stop-color="#a84a72"/><stop offset="1" stop-color="#c2566c"/></linearGradient><filter id="bl3"><feGaussianBlur stdDeviation="1.400"/></filter></defs>
<g clip-path="url(#cp88)"><rect width="88" height="88" fill="url(#t3sky)"/>
<g filter="url(#bl3)"><g filter="url(#rough)"><ellipse cx="54" cy="5" rx="30" ry="4" fill="#e57fa0"/><ellipse cx="20" cy="24" rx="22" ry="5" fill="#ee8594"/><ellipse cx="58" cy="21" rx="30" ry="8" fill="#f08c92"/><ellipse cx="60" cy="33" rx="24" ry="4.500" fill="#f59a8c"/><ellipse cx="66" cy="37.500" rx="10" ry="2.200" fill="#f8b58c"/><ellipse cx="10" cy="31" rx="8" ry="2" fill="#ec8596"/><ellipse cx="82" cy="8" rx="10" ry="6" fill="#e985a0"/></g></g>
<g filter="url(#bl05)"><path d="M33 62l6-3 4-2 4 1 5-2 4 1 3-4 4 4 5 3 6-1 6-2 12-4v22H36z" fill="#43345f"/><path d="M36 62l5-1 3 3 6-2 4 3 6-3 5 2 6-3 4 2-3 3-8 1.500-8-1-8 1-8-2z" fill="#a697c8" opacity=".45"/>
<path d="M-2 51l8-3 5-1 16 1.500 1 8 3 5 3 3 8 6 8 6 4 1v4H-2z" fill="#2a1a3b"/>
<path d="M32 76c10-1 18-3 26-4s20-6 32-10v17H32z" fill="#140a1e"/><path d="M-2 64c12 2 24 8 38 12v3H-2z" fill="#1c102a"/>
<rect x="-2" y="76" width="92" height="14" fill="url(#t3w)"/><path d="M-2 76h36l-4 1.200H-2z" fill="#2a1a3b"/><path d="M45 84l2-1.500 1-2 .8 2 3.500-.5.700 2-2 1.500h-5z" fill="#120a16"/></g></g>
</svg>
<div class="abs rtext" style="top:443.7px">St. Mary Lake</div>
<svg class="abs" style="left:465px;top:451.7px" width="36" height="34" viewBox="0 0 36 34"><path d="M18 2.800l4.400 9.300 9.800 1.300-7.200 6.900 1.900 10.100L18 25.600 9.100 30.400l1.900-10.100-7.200-6.900 9.800-1.300z" fill="#f8cf46" stroke="#f8cf46" stroke-width="2.600" stroke-linejoin="round"/></svg>
<svg class="abs" style="left:519px;top:456.2px" width="18" height="26" viewBox="0 0 18 26" fill="none" stroke="#c5c5c7" stroke-width="3.200" stroke-linecap="round" stroke-linejoin="round"><path d="M4.800 4.600l8.400 8.400-8.400 8.400"/></svg>
</div>
</body></html>
